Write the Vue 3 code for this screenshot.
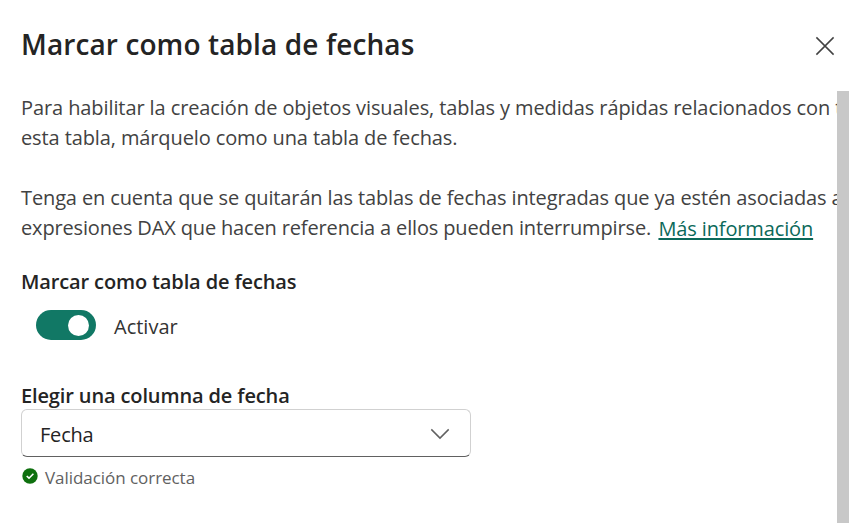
<script setup>
import { ref } from 'vue'

const enabled = ref(true)
const column = ref('Fecha')
</script>

<template>
  <main class="panel">
    <header class="head">
      <h1 class="title">Marcar como tabla de fechas</h1>
      <button class="close" aria-label="Cerrar">
        <svg width="20" height="20" viewBox="0 0 20 20"><path d="M1.4 1.4 18.6 18.6M18.6 1.4 1.4 18.6" /></svg>
      </button>
    </header>
    <div class="body">
      <section class="content">
        <p class="para">
          <span class="line l1">Para habilitar la creación de objetos visuales, tablas y medidas rápidas relacionados con t</span>
          <span class="line l2">esta tabla, márquelo como una tabla de fechas.</span>
        </p>
        <p class="para">
          <span class="line l3">Tenga en cuenta que se quitarán las tablas de fechas integradas que ya estén asociadas a</span>
          <span class="line"><span class="l4">expresiones DAX que hacen referencia a ellos pueden interrumpirse.</span><a class="link">Más información</a></span>
        </p>
        <h2 class="label first">Marcar como tabla de fechas</h2>
        <div class="switch-row" @click="enabled = !enabled">
          <span class="track" :class="{ off: !enabled }"><span class="thumb"></span></span>
          <span class="state">Activar</span>
        </div>
        <h2 class="label second">Elegir una columna de fecha</h2>
        <button class="select">
          <span class="value">{{ column }}</span>
          <svg width="20" height="12" viewBox="0 0 20 12"><path d="M1.3 1.4 10 10.1 18.7 1.4" /></svg>
        </button>
        <div class="status">
          <svg width="16" height="16" viewBox="0 0 16 16"><circle cx="8" cy="8" r="7.7" /><path d="M4.7 8 7 10.2 11.4 5.8" /></svg>
          <span class="message">Validación correcta</span>
        </div>
      </section>
      <div class="scrollbar"></div>
    </div>
  </main>
</template>

<style>
body {
  margin: 0;
  overflow: hidden;
  background: #fff;
}
</style>

<style scoped>
.panel {
  display: flex;
  flex-direction: column;
  width: 855px;
  height: 523px;
  overflow: hidden;
  background: #fff;
  color: #242424;
  font-family: "Open Sans", "Noto Sans", sans-serif;
}
.head {
  display: flex;
  justify-content: space-between;
  box-sizing: border-box;
  height: 91px;
  padding: 24px 20px 0 21px;
}
.title {
  margin: 0;
  font-size: 28px;
  line-height: 40px;
  font-weight: 600;
  letter-spacing: 0.11px;
  white-space: nowrap;
}
.close {
  width: 20px;
  height: 20px;
  margin-top: 12px;
  padding: 0;
  border: 0;
  background: none;
}
svg {
  display: block;
  flex: none;
}
path {
  fill: none;
  stroke: #424242;
  stroke-width: 1.5;
}
.body {
  display: flex;
  height: 432px;
}
.content {
  width: 816px;
  padding-left: 21px;
  overflow: hidden;
}
.scrollbar {
  width: 12px;
  background: #c8c8c8;
}
.para {
  margin: 2px 0 30px;
  color: #424242;
  font-size: 20px;
}
.para + .para {
  margin-bottom: 0;
}
.line {
  display: block;
  height: 30px;
  line-height: 30px;
  white-space: nowrap;
}
.l1 {
  letter-spacing: -0.095px;
}
.l2 {
  letter-spacing: -0.11px;
}
.l3 {
  letter-spacing: -0.125px;
}
.l4 {
  letter-spacing: -0.15px;
}
.link {
  margin-left: 7.4px;
  color: #0c695a;
  letter-spacing: -0.13px;
  vertical-align: -1px;
  text-decoration: underline;
  text-decoration-thickness: 2px;
  text-underline-offset: 2px;
}
.label {
  margin: 0;
  height: 30px;
  font-size: 20px;
  line-height: 30px;
  font-weight: 600;
  letter-spacing: -0.13px;
  white-space: nowrap;
}
.first {
  margin-top: 24px;
}
.second {
  margin-top: 41px;
}
.switch-row {
  display: flex;
  align-items: center;
  height: 30px;
  margin: 13px 0 0 15px;
}
.track {
  display: flex;
  align-items: center;
  justify-content: flex-end;
  box-sizing: border-box;
  width: 60px;
  height: 30px;
  padding: 0 7px;
  border-radius: 15px;
  background: #117865;
}
.off {
  justify-content: flex-start;
}
.thumb {
  width: 21px;
  height: 21px;
  border-radius: 50%;
  background: #fff;
}
.state {
  margin-left: 18px;
  padding-top: 2px;
  color: #333;
  font-size: 20px;
}
.select {
  display: flex;
  align-items: center;
  justify-content: space-between;
  box-sizing: border-box;
  width: 450px;
  height: 48px;
  margin-top: -2px;
  padding: 2px 20px 0 18px;
  border: 1px solid #d1d1d1;
  border-bottom-color: #616161;
  border-radius: 6px;
  background: #fff;
  color: #242424;
  font: 20px "Open Sans", "Noto Sans", sans-serif;
}
.value {
  letter-spacing: -0.2px;
}
.select path {
  stroke: #616161;
}
.status {
  display: flex;
  align-items: center;
  height: 24px;
  margin: 7px 0 0 1px;
}
.status circle {
  fill: #0e700e;
}
.status path {
  stroke: #fff;
  stroke-width: 1.6;
}
.message {
  margin-left: 7px;
  padding-top: 2px;
  color: #616161;
  font-size: 17px;
  letter-spacing: -0.05px;
}
</style>
